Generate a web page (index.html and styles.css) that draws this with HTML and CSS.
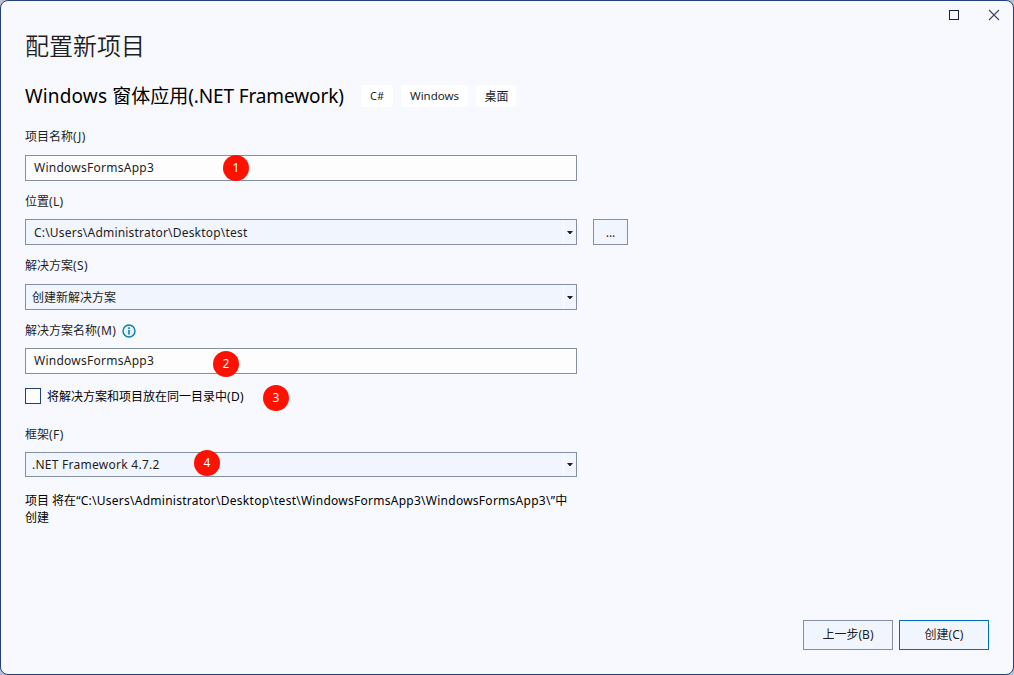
FILE: index.html
```html
<!DOCTYPE html>
<html lang="zh-CN">
<head>
<meta charset="utf-8">
<title>配置新项目</title>
<link rel="stylesheet" href="styles.css">
</head>
<body>
<div class="window">
  <div class="caption">
    <svg class="caption-icon" width="12" height="12" viewBox="0 0 12 12"><rect x="1.5" y="1.5" width="9" height="9" fill="none" stroke="#17213f"/></svg>
    <svg class="caption-icon" width="12" height="12" viewBox="0 0 12 12"><path d="M1 1 11 11M11 1 1 11" fill="none" stroke="#3c4660" stroke-width="1.1"/></svg>
  </div>
  <h1 class="title">配置新项目</h1>
  <div class="template">
    <h2 class="template-name"><span class="name-win">Windows</span> 窗体应用<span class="name-net">(.NET Framework)</span></h2>
    <span class="tag tag-cs">C#</span>
    <span class="tag tag-win">Windows</span>
    <span class="tag tag-desk">桌面</span>
  </div>
  <form class="form">
    <label class="label">项目名称<span class="key">(J)</span></label>
    <div class="box input"><span class="latin">WindowsFormsApp3</span><i class="badge badge-1">1</i></div>

    <label class="label label-location">位置<span class="key">(L)</span></label>
    <div class="location">
      <div class="box select path"><span class="latin">C:\Users\Administrator\Desktop\test</span><i class="drop"><svg width="6" height="3" viewBox="0 0 6 3"><path d="M0 0H6L3.5 3H2.5Z" fill="#1e1e1e"/></svg></i></div>
      <button class="browse" type="button">...</button>
    </div>

    <label class="label label-solution">解决方案<span class="key">(S)</span></label>
    <div class="box select"><span>创建新解决方案</span><i class="drop"><svg width="6" height="3" viewBox="0 0 6 3"><path d="M0 0H6L3.5 3H2.5Z" fill="#1e1e1e"/></svg></i></div>

    <label class="label label-name">解决方案名称<span class="key">(M)</span>
      <svg class="info" width="14" height="14" viewBox="0 0 14 14"><circle cx="7" cy="7" r="6" fill="#e2f2f7" stroke="#0b7fa5" stroke-width="1.4"/><path d="M7 6V10.5M7 3.3V4.9" stroke="#0b7fa5" stroke-width="1.6"/></svg>
    </label>
    <div class="box input"><span class="latin">WindowsFormsApp3</span><i class="badge badge-2">2</i></div>

    <div class="check"><span class="checkbox"></span><span>将解决方案和项目放在同一目录中<span class="key">(D)</span></span><i class="badge badge-3">3</i></div>

    <label class="label label-framework">框架<span class="key">(F)</span></label>
    <div class="box select framework"><span class="latin">.NET Framework 4.7.2</span><i class="drop"><svg width="6" height="3" viewBox="0 0 6 3"><path d="M0 0H6L3.5 3H2.5Z" fill="#1e1e1e"/></svg></i><i class="badge badge-4">4</i></div>

    <p class="summary">项目 将在<span class="latin">“C:\Users\Administrator\Desktop\test\WindowsFormsApp3\WindowsFormsApp3\”</span>中<br>创建</p>
  </form>
  <div class="actions">
    <button class="action" type="button">上一步<span>(B)</span></button>
    <button class="action primary" type="button">创建<span>(C)</span></button>
  </div>
</div>
</body>
</html>
```
FILE: styles.css
```css
* { box-sizing: border-box; }

body {
  margin: 0;
  background: #b9c0d2;
  font: 12px/17px "Noto Sans", "Noto Sans CJK SC", sans-serif;
  color: #1e1e1e;
}

.window {
  display: flex;
  flex-direction: column;
  width: 1014px;
  height: 675px;
  padding: 0 24px 24px;
  border: 1px solid #233f7c;
  border-radius: 8px;
  background: #f8f9fe;
}

.caption {
  display: flex;
  justify-content: flex-end;
  gap: 28px;
  height: 28px;
  padding-top: 8px;
  margin-right: -11px;
}

.caption-icon { display: block; }

.title {
  height: 34px;
  margin: 0;
  font-family: "Noto Sans CJK SC", sans-serif;
  font-size: 24px;
  font-weight: 350;
  line-height: 31px;
}

.template {
  display: flex;
  align-items: center;
  height: 28px;
  margin-top: 19px;
}

.template-name {
  width: 336px;
  margin: 0;
  font-size: 19px;
  font-weight: 400;
  line-height: 28px;
  white-space: nowrap;
  color: #000;
}

.name-win { letter-spacing: 0.15px; }
.name-net { letter-spacing: -0.12px; }

.tag {
  height: 22px;
  margin-right: 8px;
  border-radius: 3px;
  background: #fff;
  line-height: 22px;
  text-align: center;
  white-space: nowrap;
}

.tag-cs { width: 32px; font-size: 11px; }
.tag-win { width: 67px; font-size: 11.5px; }
.tag-desk { width: 40px; padding-left: 1px; line-height: 23px; }

.form {
  display: flex;
  flex-direction: column;
  width: 552px;
  margin-top: 18px;
}

.label {
  display: flex;
  align-items: center;
  height: 17px;
  margin-bottom: 10px;
  white-space: nowrap;
}

.key { letter-spacing: 0.35px; }

.label-location { margin: 12px 0 9px; }
.label-solution { margin-top: 12px; }
.label-name { margin: 12px 0 9px; }
.label-framework { margin: 22px 0 9px; }

.info { margin-left: 6px; }

.latin { letter-spacing: 0.26px; }

.box {
  position: relative;
  display: flex;
  flex: none;
  align-items: center;
  width: 552px;
  height: 26px;
  border: 1px solid #838fa6;
  white-space: nowrap;
}

.input { padding: 0 0 2px 8px; background: #fdfdfd; }
.select { padding-left: 6px; background: #f1f5fd; }
.path { padding-left: 8px; }
.path .latin { letter-spacing: 0.2px; }
.framework { height: 25px; }

.drop {
  display: flex;
  align-items: center;
  justify-content: center;
  width: 13px;
  height: 100%;
  margin-left: auto;
  border-left: 1px solid #fff;
}

.location { display: flex; gap: 16px; }

.browse {
  flex: none;
  width: 35px;
  height: 26px;
  padding: 0;
  border: 1px solid #838fa6;
  background: #f1f5fd;
  font: inherit;
  color: inherit;
}

.check {
  position: relative;
  display: flex;
  align-items: center;
  gap: 6px;
  height: 16px;
  margin-top: 14px;
  color: #000;
}

.checkbox {
  width: 16px;
  height: 16px;
  border: 1px solid #233f7c;
  background: #fdfdfd;
}

.badge {
  position: absolute;
  width: 26px;
  height: 26px;
  border-radius: 50%;
  background: #fe1100;
  color: #fff;
  font-style: normal;
  line-height: 26px;
  text-align: center;
}

.badge-1 { left: 197px; top: -1px; }
.badge-2 { left: 187px; top: 2px; }
.badge-3 { left: 238px; top: -3px; }
.badge-4 { left: 168px; top: -3px; }

.summary {
  margin: 15px 0 0;
  color: #000;
  white-space: nowrap;
}

.actions {
  display: flex;
  justify-content: flex-end;
  gap: 6px;
  margin-top: auto;
}

.action {
  width: 90px;
  height: 30px;
  padding: 0 0 2px;
  border: 1px solid #838fa6;
  background: #f1f5fd;
  font: inherit;
  color: inherit;
}

.primary { border-color: #006cbe; }
```
